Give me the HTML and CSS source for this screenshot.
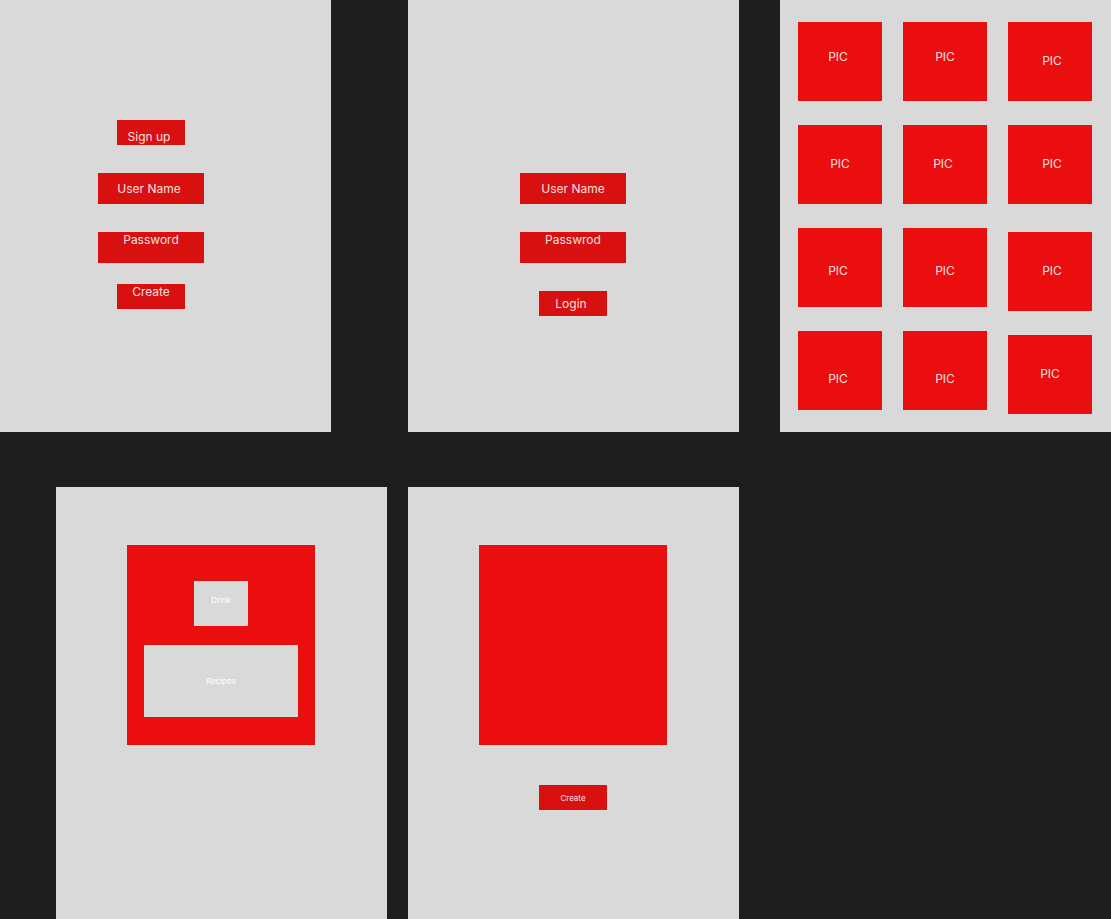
FILE: index.html
```html
<!DOCTYPE html>
<html lang="en">
<head>
<meta charset="utf-8">
<meta name="viewport" content="width=device-width, initial-scale=1">
<title>Drink recipes wireframes</title>
<link rel="stylesheet" href="styles.css">
</head>
<body>
<main class="board">
  <div class="board-row board-row-top">
    <form class="frame frame-signup">
      <div class="stack">
        <h1 class="chip chip-low lean-left">Sign up</h1>
        <input class="field lean-left" type="text" placeholder="User Name" aria-label="User Name">
        <input class="field field-high" type="password" placeholder="Password" aria-label="Password">
        <button class="chip chip-high" type="button">Create</button>
      </div>
    </form>
    <form class="frame frame-login">
      <div class="stack">
        <input class="field" type="text" placeholder="User Name" aria-label="User Name">
        <input class="field field-high" type="password" placeholder="Passwrod" aria-label="Passwrod">
        <button class="chip lean-left" type="button">Login</button>
      </div>
    </form>
    <section class="frame gallery" aria-label="Gallery">
      <div class="column">
        <div class="tile tile-high lean-left">PIC</div>
        <div class="tile">PIC</div>
        <div class="tile tile-low lean-left">PIC</div>
        <div class="tile tile-lowest lean-left">PIC</div>
      </div>
      <div class="column">
        <div class="tile tile-high">PIC</div>
        <div class="tile lean-left">PIC</div>
        <div class="tile tile-low">PIC</div>
        <div class="tile tile-lowest">PIC</div>
      </div>
      <div class="column column-split">
        <div class="pair">
          <div class="tile lean-right">PIC</div>
          <div class="tile lean-right">PIC</div>
        </div>
        <div class="pair">
          <div class="tile lean-right">PIC</div>
          <div class="tile">PIC</div>
        </div>
      </div>
    </section>
  </div>
  <div class="board-row board-row-bottom">
    <section class="frame frame-card" aria-label="Recipe">
      <div class="card">
        <div class="drink">Drink</div>
        <div class="recipes">Recipes</div>
      </div>
    </section>
    <section class="frame frame-card" aria-label="New recipe">
      <div class="card"></div>
      <button class="chip chip-small" type="button">Create</button>
    </section>
  </div>
</main>
</body>
</html>
```
FILE: styles.css
```css
* {
  box-sizing: border-box;
}

:root {
  --label: rgba(255, 255, 255, 0.9);
}

body {
  margin: 0;
  background: #1e1e1e;
  color: var(--label);
  font: 400 12px/16px Inter, "Liberation Sans", sans-serif;
}

.board {
  display: grid;
  gap: 55px;
}

.board-row {
  display: grid;
}

/* Odd tracks hold frames, the tracks between them are canvas */
.board-row-top {
  grid-template-columns: 331fr 77fr 331fr 41fr 331fr;
}

.board-row-top > :nth-child(2) {
  grid-column: 3;
}

.board-row-top > :nth-child(3) {
  grid-column: 5;
}

.board-row-bottom {
  grid-template-columns: 56fr 331fr 21fr 331fr 372fr;
}

.board-row-bottom > :nth-child(1) {
  grid-column: 2;
}

.board-row-bottom > :nth-child(2) {
  grid-column: 4;
}

.frame {
  display: grid;
  align-content: start;
  min-height: 432px;
  background: #d9d9d9;
}

.frame-signup {
  grid-template-columns: 98fr 106px 127fr;
  padding-top: 120px;
}

.frame-login {
  grid-template-columns: 112fr 106px 113fr;
  padding-top: 173px;
}

.stack {
  grid-column: 2;
  display: flex;
  flex-direction: column;
  align-items: center;
  gap: 28px;
}

.field,
.chip {
  margin: 0;
  border: 0;
  border-radius: 0;
  padding: 0;
  background: #d91010;
  color: var(--label);
  font: inherit;
  text-align: center;
}

.field {
  width: 100%;
  height: 31px;
}

.field::placeholder {
  color: var(--label);
  opacity: 1;
}

.field-high {
  padding-bottom: 16px;
}

.chip {
  display: flex;
  align-items: center;
  justify-content: center;
  width: 68px;
  height: 25px;
}

.chip-low {
  padding-top: 8px;
}

.chip-high {
  padding-bottom: 10px;
}

.frame-signup .chip-high {
  margin-top: -7px;
}

.chip-small {
  font-size: 8px;
}

.gallery {
  grid-template-columns: repeat(3, 1fr);
  gap: 21px;
  padding: 22px 19px 18px 18px;
}

.column,
.pair {
  display: flex;
  flex-direction: column;
  gap: 24px;
}

.column-split {
  gap: 28px;
}

.tile {
  display: flex;
  align-items: center;
  justify-content: center;
  height: 79px;
  padding-bottom: 2px;
  background: #ea0e0e;
}

.tile-high {
  padding-bottom: 10px;
}

.tile-low {
  padding-top: 8px;
}

.tile-lowest {
  padding-top: 18px;
}

.lean-left {
  padding-right: 4px;
}

.lean-right {
  padding-left: 4px;
}

.frame-card {
  grid-template-columns: 71fr 188px 72fr;
  row-gap: 40px;
  padding-top: 58px;
}

.frame-card > * {
  grid-column: 2;
  justify-self: center;
}

.card {
  display: flex;
  flex-direction: column;
  align-items: center;
  gap: 19px;
  width: 100%;
  height: 200px;
  padding: 36px 17px 28px;
  background: #ea0e0e;
  color: #fff;
  font-size: 8px;
}

.drink,
.recipes {
  display: flex;
  align-items: center;
  justify-content: center;
  background: #d9d9d9;
}

.drink {
  width: 54px;
  height: 45px;
  padding-bottom: 8px;
}

.recipes {
  width: 100%;
  height: 72px;
}
```
